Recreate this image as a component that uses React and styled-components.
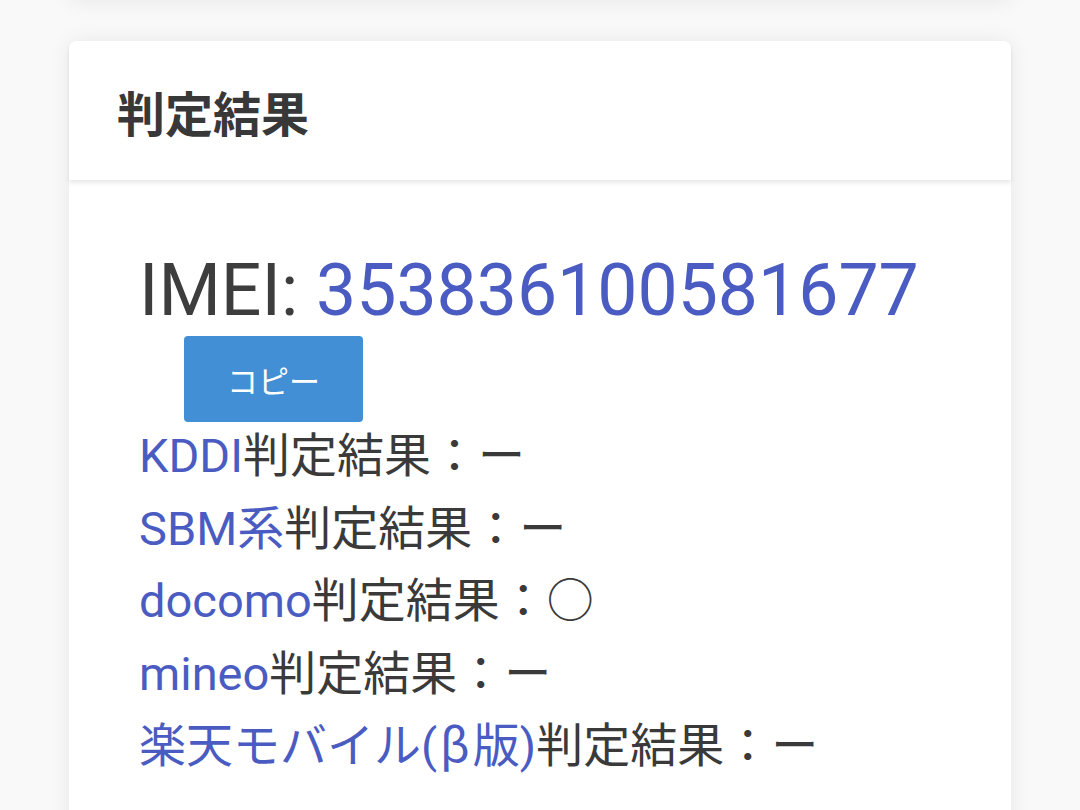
import React from "react"
import styled, { createGlobalStyle } from "styled-components"

const Global = createGlobalStyle`
  html, body {
    margin: 0;
    padding: 0;
    background: #f9f9f9;
    font-family: Roboto, "Noto Sans CJK JP", sans-serif;
    color: #333;
    overflow: hidden;
  }
`

const Page = styled.div`
  width: 1080px;
  height: 810px;
  overflow: hidden;
`

const PrevCard = styled.div`
  width: 942px;
  height: 200px;
  margin: -200px 0 0 69px;
  background: #fff;
  border-radius: 8px;
  box-shadow: 0 2px 22px rgba(0, 0, 0, 0.07);
`

const Card = styled.section`
  width: 942px;
  margin: 41px 0 0 69px;
  background: #fff;
  border-radius: 8px;
  box-shadow: 0 0 22px rgba(0, 0, 0, 0.07);
  min-height: 900px;
`

const Header = styled.header`
  height: 139px;
  display: flex;
  align-items: center;
  padding-left: 48px;
  border-radius: 8px 8px 0 0;
  background: #fff;
  box-shadow: 0 3px 4px rgba(0, 0, 0, 0.09);
  position: relative;
`

const Title = styled.h2`
  margin: 0;
  font-size: 48px;
  font-weight: 700;
  color: #383838;
  font-family: "Noto Sans CJK JP", sans-serif;
`

const Body = styled.div`
  padding: 69px 0 0 70px;
`

const Imei = styled.div`
  font-size: 71.5px;
  line-height: 84px;
  color: #3d3d3d;
  white-space: nowrap;
`

const Blue = styled.span`
  color: #4a5cc2;
`

const Beta = styled.span`
  font-family: "Noto Sans CJK JP", sans-serif;
  margin: 0 3px;
`

const CopyButton = styled.button`
  display: block;
  margin: 3px 0 0 45px;
  width: 179px;
  height: 86px;
  border: none;
  border-radius: 4px;
  background: #438fd5;
  color: #fff;
  font-family: "Noto Sans CJK JP", sans-serif;
  font-size: 31px;
  cursor: pointer;
`

const Results = styled.div`
  margin-top: -4px;
`

const Row = styled.div`
  font-size: 47px;
  line-height: 68.5px;
  color: #3a3a3a;
  white-space: nowrap;
`

const Mark = styled.span`
  font-family: "Noto Sans CJK JP", sans-serif;
`

const rows = [
  { name: "KDDI", mark: "ー" },
  { name: "SBM系", mark: "ー" },
  { name: "docomo", mark: "○" },
  { name: "mineo", mark: "ー" },
  { name: <>楽天モバイル(<Beta>β</Beta>版)</>, key: "rakuten", mark: "ー" },
]

export default function App() {
  return (
    <Page>
      <Global />
      <PrevCard />
      <Card>
        <Header>
          <Title>判定結果</Title>
        </Header>
        <Body>
          <Imei>
            IMEI: <Blue>353836100581677</Blue>
          </Imei>
          <CopyButton>コピー</CopyButton>
          <Results>
            {rows.map((r) => (
              <Row key={r.key || r.name}>
                <Blue>{r.name}</Blue>判定結果：<Mark>{r.mark}</Mark>
              </Row>
            ))}
          </Results>
        </Body>
      </Card>
    </Page>
  )
}
